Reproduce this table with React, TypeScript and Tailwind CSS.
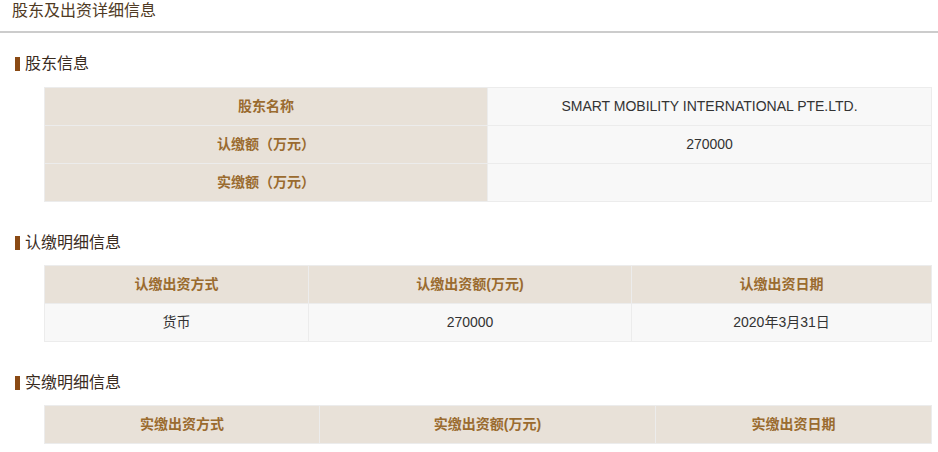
const font = { fontFamily: '"Liberation Sans", "Noto Sans CJK SC", sans-serif' }

function SectionTitle({ text }: { text: string }) {
  return (
    <div className="flex items-center h-6 pl-[15px]">
      <span className="w-[5px] h-[14px] bg-[#8a4a14] mr-[5px]" />
      <span className="text-[16px] text-[#3a2b1e]">{text}</span>
    </div>
  )
}

const th = "border border-[#ececec] bg-[#e8e1d8] text-[#9a6b2f] font-bold text-[14px] h-[38px] text-center"
const td = "border border-[#ececec] bg-[#f8f8f8] text-[#333] text-[14px] h-[38px] text-center"

export default function App() {
  return (
    <div className="w-[938px] h-[452px] bg-white overflow-hidden" style={font}>
      {/* Page title */}
      <div className="h-[33px] border-b-2 border-[#cccccc] pl-3 flex items-start">
        <h1 className="text-[16px] leading-[22px] text-[#4f3a24]">股东及出资详细信息</h1>
      </div>

      {/* 股东信息 */}
      <div className="mt-[19px]">
        <SectionTitle text="股东信息" />
        <table className="ml-[44px] mt-[11px] w-[888px] border-collapse table-fixed">
          <tbody>
            <tr>
              <td className={`${th} w-[443px]`}>股东名称</td>
              <td className={td}>SMART MOBILITY INTERNATIONAL PTE.LTD.</td>
            </tr>
            <tr>
              <td className={th}>认缴额（万元）</td>
              <td className={td}>270000</td>
            </tr>
            <tr>
              <td className={th}>实缴额（万元）</td>
              <td className={td}></td>
            </tr>
          </tbody>
        </table>
      </div>

      {/* 认缴明细信息 */}
      <div className="mt-[29px]">
        <SectionTitle text="认缴明细信息" />
        <table className="ml-[44px] mt-[10px] w-[888px] border-collapse table-fixed">
          <thead>
            <tr>
              <th className={`${th} w-[264px]`}>认缴出资方式</th>
              <th className={`${th} w-[323px]`}>认缴出资额(万元)</th>
              <th className={th}>认缴出资日期</th>
            </tr>
          </thead>
          <tbody>
            <tr>
              <td className={td}>货币</td>
              <td className={td}>270000</td>
              <td className={td}>2020年3月31日</td>
            </tr>
          </tbody>
        </table>
      </div>

      {/* 实缴明细信息 */}
      <div className="mt-[29px]">
        <SectionTitle text="实缴明细信息" />
        <table className="ml-[44px] mt-[10px] w-[888px] border-collapse table-fixed">
          <thead>
            <tr>
              <th className={`${th} w-[275px]`}>实缴出资方式</th>
              <th className={`${th} w-[336px]`}>实缴出资额(万元)</th>
              <th className={th}>实缴出资日期</th>
            </tr>
          </thead>
        </table>
      </div>
    </div>
  )
}
